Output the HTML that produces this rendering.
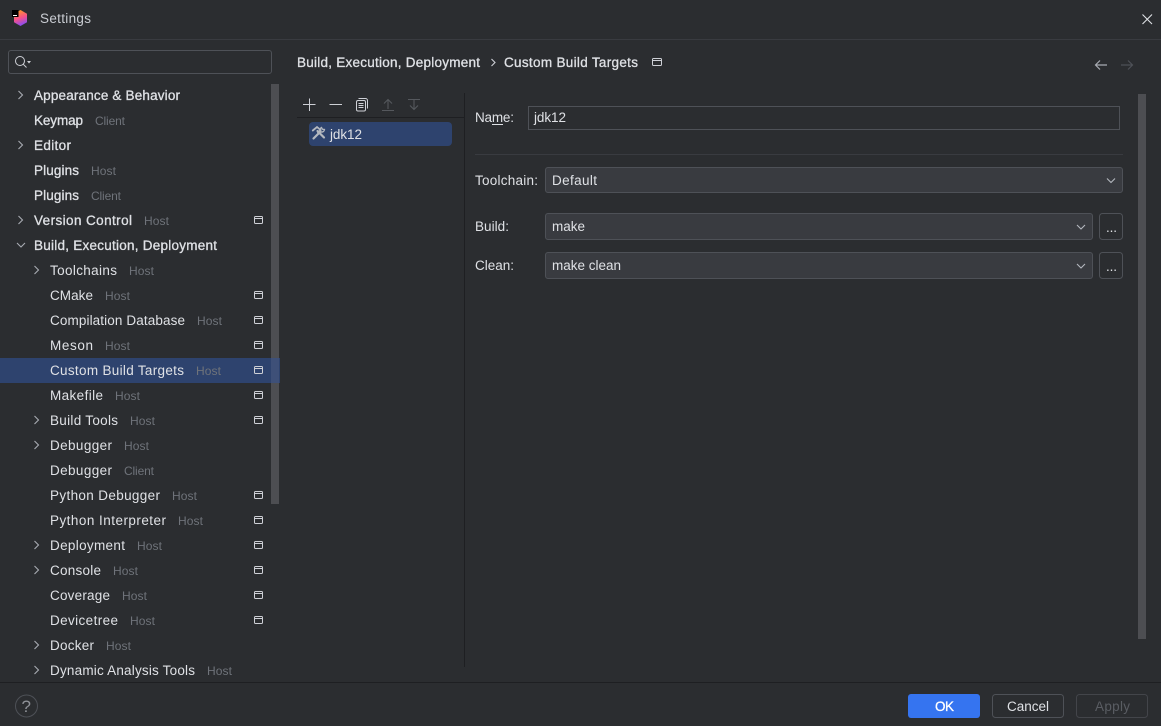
<!DOCTYPE html>
<html><head><meta charset="utf-8"><title>Settings</title>
<style>
html,body{margin:0;padding:0;background:#2b2d30;overflow:hidden}
svg{display:block}
text{font-family:"Liberation Sans",sans-serif;font-size:13.5px;fill:#dfe1e5;white-space:pre}
.b{stroke:#dfe1e5;stroke-width:.3px}
.h{font-size:12px;fill:#6f737a}
</style></head><body>
<svg width="1161" height="726" viewBox="0 0 1161 726" xmlns="http://www.w3.org/2000/svg">
<defs><linearGradient id="g" x1=".35" y1="0" x2=".65" y2="1"><stop offset="0" stop-color="#ff9a1f"/><stop offset=".5" stop-color="#f5508a"/><stop offset="1" stop-color="#7b4dff"/></linearGradient></defs>
<rect width="1161" height="726" fill="#2b2d30"/>
<!-- title -->
<path d="M20.500 10 27 13.700V22.300L20.500 26 14 22.300V13.700Z" fill="url(#g)"/>
<rect x="12" y="10" width="6.500" height="7" fill="#000"/><rect x="13" y="15" width="4" height="1" fill="#fff"/>
<text x="40" y="23" textLength="51" style="fill:#c9ccd2">Settings</text>
<path d="M1142.500 14.500l9.500 9.500M1152 14.500l-9.500 9.500" stroke="#dfe1e5" stroke-width="1.100" fill="none"/>
<rect y="39" width="1161" height="1" fill="#393b40"/>
<!-- search -->
<rect x="8.500" y="50.500" width="263" height="23" rx="2.500" fill="none" stroke="#4e5157"/>
<circle cx="20" cy="61" r="4.500" fill="none" stroke="#ced0d6"/><path d="M23.300 64.300l3.200 3.200" stroke="#ced0d6" fill="none"/><path d="M27 61h4l-2 2.500z" fill="#ced0d6"/>
<!-- selection row + scrollbar -->
<rect y="358" width="280" height="25" fill="#2e436e"/>
<rect x="271" y="84" width="8" height="420" fill="#4d4e52"/>
<rect x="271" y="358" width="8" height="25" fill="#3e5078"/>
<!-- tree -->
<g fill="none" stroke="#a8abb2" stroke-width="1.100">
<path d="M18.500 91l4 4-4 4M18.500 141l4 4-4 4M18.500 216l4 4-4 4M17 243l4 4 4-4"/>
<path d="M34.500 266l4 4-4 4M34.500 416l4 4-4 4M34.500 441l4 4-4 4M34.500 541l4 4-4 4M34.500 566l4 4-4 4M34.500 641l4 4-4 4M34.500 666l4 4-4 4"/>
</g>
<text class="b" x="34" y="100" textLength="146">Appearance &amp; Behavior</text>
<text class="b" x="34" y="125" textLength="49">Keymap</text><text class="h" x="95" y="125" textLength="30">Client</text>
<text class="b" x="34" y="150" textLength="37">Editor</text>
<text class="b" x="34" y="175" textLength="45">Plugins</text><text class="h" x="91" y="175" textLength="25">Host</text>
<text class="b" x="34" y="200" textLength="45">Plugins</text><text class="h" x="91" y="200" textLength="30">Client</text>
<text class="b" x="34" y="225" textLength="98">Version Control</text><text class="h" x="144" y="225" textLength="25">Host</text>
<text class="b" x="34" y="250" textLength="183">Build, Execution, Deployment</text>
<text x="50" y="275" textLength="67">Toolchains</text><text class="h" x="129" y="275" textLength="25">Host</text>
<text x="50" y="300" textLength="43">CMake</text><text class="h" x="105" y="300" textLength="25">Host</text>
<text x="50" y="325" textLength="135">Compilation Database</text><text class="h" x="197" y="325" textLength="25">Host</text>
<text x="50" y="350" textLength="43">Meson</text><text class="h" x="105" y="350" textLength="25">Host</text>
<text x="50" y="375" textLength="134">Custom Build Targets</text><text class="h" x="196" y="375" textLength="25">Host</text>
<text x="50" y="400" textLength="53">Makefile</text><text class="h" x="115" y="400" textLength="25">Host</text>
<text x="50" y="425" textLength="68">Build Tools</text><text class="h" x="130" y="425" textLength="25">Host</text>
<text x="50" y="450" textLength="62">Debugger</text><text class="h" x="124" y="450" textLength="25">Host</text>
<text x="50" y="475" textLength="62">Debugger</text><text class="h" x="124" y="475" textLength="30">Client</text>
<text x="50" y="500" textLength="110">Python Debugger</text><text class="h" x="172" y="500" textLength="25">Host</text>
<text x="50" y="525" textLength="116">Python Interpreter</text><text class="h" x="178" y="525" textLength="25">Host</text>
<text x="50" y="550" textLength="75">Deployment</text><text class="h" x="137" y="550" textLength="25">Host</text>
<text x="50" y="575" textLength="51">Console</text><text class="h" x="113" y="575" textLength="25">Host</text>
<text x="50" y="600" textLength="60">Coverage</text><text class="h" x="122" y="600" textLength="25">Host</text>
<text x="50" y="625" textLength="68">Devicetree</text><text class="h" x="130" y="625" textLength="25">Host</text>
<text x="50" y="650" textLength="44">Docker</text><text class="h" x="106" y="650" textLength="25">Host</text>
<text x="50" y="675" textLength="145">Dynamic Analysis Tools</text><text class="h" x="207" y="675" textLength="25">Host</text>
<!-- project icons -->
<g fill="none" stroke="#ced0d6" stroke-width="1">
<path d="M255.500 216.500h6a1 1 0 0 1 1 1v5a1 1 0 0 1-1 1h-6a1 1 0 0 1-1-1v-5a1 1 0 0 1 1-1zM254.500 218.500h8"/>
<path d="M255.500 291.500h6a1 1 0 0 1 1 1v5a1 1 0 0 1-1 1h-6a1 1 0 0 1-1-1v-5a1 1 0 0 1 1-1zM254.500 293.500h8"/>
<path d="M255.500 316.500h6a1 1 0 0 1 1 1v5a1 1 0 0 1-1 1h-6a1 1 0 0 1-1-1v-5a1 1 0 0 1 1-1zM254.500 318.500h8"/>
<path d="M255.500 341.500h6a1 1 0 0 1 1 1v5a1 1 0 0 1-1 1h-6a1 1 0 0 1-1-1v-5a1 1 0 0 1 1-1zM254.500 343.500h8"/>
<path d="M255.500 366.500h6a1 1 0 0 1 1 1v5a1 1 0 0 1-1 1h-6a1 1 0 0 1-1-1v-5a1 1 0 0 1 1-1zM254.500 368.500h8"/>
<path d="M255.500 391.500h6a1 1 0 0 1 1 1v5a1 1 0 0 1-1 1h-6a1 1 0 0 1-1-1v-5a1 1 0 0 1 1-1zM254.500 393.500h8"/>
<path d="M255.500 416.500h6a1 1 0 0 1 1 1v5a1 1 0 0 1-1 1h-6a1 1 0 0 1-1-1v-5a1 1 0 0 1 1-1zM254.500 418.500h8"/>
<path d="M255.500 491.500h6a1 1 0 0 1 1 1v5a1 1 0 0 1-1 1h-6a1 1 0 0 1-1-1v-5a1 1 0 0 1 1-1zM254.500 493.500h8"/>
<path d="M255.500 516.500h6a1 1 0 0 1 1 1v5a1 1 0 0 1-1 1h-6a1 1 0 0 1-1-1v-5a1 1 0 0 1 1-1zM254.500 518.500h8"/>
<path d="M255.500 541.500h6a1 1 0 0 1 1 1v5a1 1 0 0 1-1 1h-6a1 1 0 0 1-1-1v-5a1 1 0 0 1 1-1zM254.500 543.500h8"/>
<path d="M255.500 566.500h6a1 1 0 0 1 1 1v5a1 1 0 0 1-1 1h-6a1 1 0 0 1-1-1v-5a1 1 0 0 1 1-1zM254.500 568.500h8"/>
<path d="M255.500 591.500h6a1 1 0 0 1 1 1v5a1 1 0 0 1-1 1h-6a1 1 0 0 1-1-1v-5a1 1 0 0 1 1-1zM254.500 593.500h8"/>
<path d="M255.500 616.500h6a1 1 0 0 1 1 1v5a1 1 0 0 1-1 1h-6a1 1 0 0 1-1-1v-5a1 1 0 0 1 1-1zM254.500 618.500h8"/>
<path d="M653.500 58.500h7a1 1 0 0 1 1 1v5a1 1 0 0 1-1 1h-7a1 1 0 0 1-1-1v-5a1 1 0 0 1 1-1zM652.500 60.500h9"/>
</g>
<!-- breadcrumb -->
<text class="b" x="297" y="67" textLength="183">Build, Execution, Deployment</text>
<path d="M491.500 59l3.500 3.500-3.500 3.500" fill="none" stroke="#ced0d6" stroke-width="1.100"/>
<text class="b" x="504" y="67" textLength="134">Custom Build Targets</text>
<path d="M1107 65h-11M1100 60.500l-4.500 4.500 4.500 4.500" fill="none" stroke="#a8abb2" stroke-width="1.200"/>
<path d="M1121 65h11M1128 60.500l4.500 4.500-4.500 4.500" fill="none" stroke="#4e5157" stroke-width="1.200"/>
<!-- toolbar -->
<path d="M303 104.500h12.500M309.500 98.500v12.500M329.500 104.500h12.500" stroke="#ced0d6" fill="none"/>
<g fill="none" stroke="#ced0d6"><rect x="356.500" y="100.500" width="9" height="10.500" rx="1.500"/><path d="M358.500 98.500h7a2 2 0 0 1 2 2v8M358.500 103.500h5M358.500 105.500h5M358.500 107.500h5"/></g>
<path d="M388 109v-9M384 103.500l4-4 4 4M382 110.500h12" fill="none" stroke="#55585d" stroke-width="1.100"/>
<path d="M414 100v9M410 105.500l4 4 4-4M408 99.500h12" fill="none" stroke="#55585d" stroke-width="1.100"/>
<rect x="297" y="117" width="167" height="1" fill="#1e1f22"/>
<rect x="464" y="93" width="1" height="574" fill="#1e1f22"/>
<rect x="309" y="122" width="143" height="24" rx="4" fill="#2e436e"/>
<!-- crossed hammer and wrench -->
<g fill="none" stroke="#b4b8bf" stroke-linecap="round">
<path d="M313.500 138.500l7-7" stroke-width="2.200"/>
<path d="M324 137.500l-6.500-6.500" stroke-width="2.200"/>
<path d="M312.800 130.500l4.200-3.500 3.500 3-2.500 2.500" stroke-width="1.800"/>
<path d="M320.500 131.500a2.800 2.800 0 0 1 1-4l1 1.800 2 .2a2.800 2.800 0 0 1-3.500 2.500" stroke-width="1.300"/>
</g>
<text x="330" y="139" textLength="32">jdk12</text>
<!-- form -->
<text x="475" y="122" textLength="39">Name:</text><rect x="492" y="124" width="11" height="1" fill="#dfe1e5"/>
<rect x="528.500" y="106.500" width="591" height="23" fill="none" stroke="#4e5157"/>
<text x="534" y="122" textLength="32">jdk12</text>
<rect x="475" y="154" width="648" height="1" fill="#393b40"/>
<text x="475" y="185" textLength="63">Toolchain:</text>
<rect x="545.500" y="167.500" width="577" height="25" rx="2.500" fill="#393b40" stroke="#4e5157"/>
<text x="552" y="185" textLength="45">Default</text>
<path d="M1107 178.500l4 4 4-4" fill="none" stroke="#b4b8bf" stroke-width="1.100"/>
<text x="475" y="231" textLength="34">Build:</text>
<rect x="545.500" y="213.500" width="547" height="26" rx="2.500" fill="#393b40" stroke="#4e5157"/>
<text x="552" y="231" textLength="33">make</text>
<path d="M1077 225l4 4 4-4" fill="none" stroke="#b4b8bf" stroke-width="1.100"/>
<rect x="1099.500" y="213.500" width="23" height="26" rx="3" fill="none" stroke="#4e5157"/>
<text x="1106" y="232" textLength="11">...</text>
<text x="475" y="270" textLength="39">Clean:</text>
<rect x="545.500" y="252.500" width="547" height="26" rx="2.500" fill="#393b40" stroke="#4e5157"/>
<text x="552" y="270" textLength="69">make clean</text>
<path d="M1077 264l4 4 4-4" fill="none" stroke="#b4b8bf" stroke-width="1.100"/>
<rect x="1099.500" y="252.500" width="23" height="26" rx="3" fill="none" stroke="#4e5157"/>
<text x="1106" y="271" textLength="11">...</text>
<rect x="1138" y="94" width="8" height="545" fill="#4d4e52"/>
<!-- footer -->
<rect y="682" width="1161" height="1" fill="#1e1f22"/>
<circle cx="26.500" cy="706" r="11" fill="none" stroke="#4e5157"/>
<text x="21.500" y="712" textLength="9" style="fill:#8f9298;font-size:17px">?</text>
<rect x="908" y="694" width="72" height="24" rx="3" fill="#3574f0"/>
<text class="b" x="935" y="711" textLength="19" style="fill:#fff;stroke:#fff">OK</text>
<rect x="992.500" y="694.500" width="71" height="23" rx="3" fill="none" stroke="#4e5157"/>
<text x="1007" y="711" textLength="42">Cancel</text>
<rect x="1076.500" y="694.500" width="71" height="23" rx="3" fill="none" stroke="#43454a"/>
<text x="1095" y="711" textLength="35" style="fill:#5a5d63">Apply</text>
</svg>
</body></html>
